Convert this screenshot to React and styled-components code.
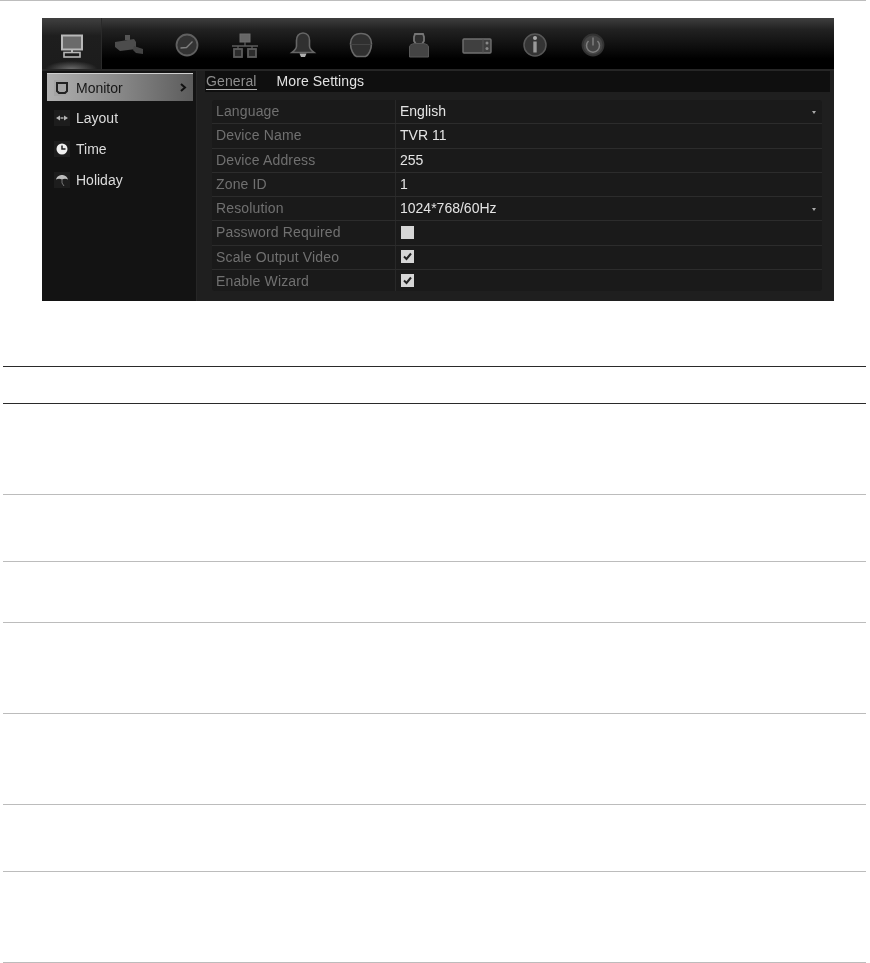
import React from "react";
import styled, { createGlobalStyle } from "styled-components";

const Global = createGlobalStyle`
  html, body { margin: 0; padding: 0; background: #fff; }
  body { font-family: "Liberation Sans", Arial, sans-serif; }
`;

const tabIcons = [
  // camera
  <g key="cam">
    <path d="M11 5h5v5h-5z" fill="#555" />
    <path d="M1 12l19-3 2 3v7l-16 2-5-4z" fill="#4c4c4c" />
    <path d="M20 16l9 3v5l-7-1-3-3z" fill="#444" />
  </g>,
  // clock
  <g key="clock" transform="translate(2 0)">
    <circle cx="13" cy="15" r="10.500" fill="#333" stroke="#606060" strokeWidth="1.800" />
    <path d="M6.500 18l6-.5 6-6" fill="none" stroke="#808080" strokeWidth="1.300" />
  </g>,
  // network
  <g key="net" fill="none" stroke="#5c5c5c">
    <rect x="10" y="4" width="10" height="8" fill="#666" stroke="#6e6e6e" />
    <path d="M15 12v4M2 16h26M8 16v3M22 16v3" strokeWidth="1.300" />
    <rect x="4" y="19" width="8" height="8" fill="#2c2c2c" strokeWidth="1.800" />
    <rect x="18" y="19" width="8" height="8" fill="#2c2c2c" strokeWidth="1.800" />
  </g>,
  // bell
  <g key="bell">
    <path d="M15 3c4.500 0 6.500 3.500 6.500 7.500v5.500c0 3 2.500 5 4.500 6.500H4c2-1.500 4.500-3.500 4.500-6.500v-5.500C8.500 6.500 10.500 3 15 3z" fill="#303030" stroke="#666" strokeWidth="1.600" />
    <path d="M11.500 23.500h7l-1.500 3.500h-4z" fill="#b0b0b0" />
  </g>,
  // helmet
  <g key="helmet">
    <path d="M15 3.500c7 0 10.500 4.500 10.500 10 0 6-3 12-6 13h-9c-3-1-6-7-6-13 0-5.500 3.500-10 10.500-10z" fill="#303030" stroke="#686868" strokeWidth="1.600" />
    <path d="M4.500 14.500h21" stroke="#444" />
  </g>,
  // person
  <g key="person">
    <path d="M11 4h8l1 3v4l-2 3h-6l-2-3V7z" fill="#2e2e2e" stroke="#757575" strokeWidth="1.800" />
    <path d="M5.500 17c0-2 2-3 5-3.500h9c3 .5 5 1.500 5 3.500v10h-19z" fill="#444" stroke="#585858" />
  </g>,
  // hdd
  <g key="hdd">
    <rect x="1" y="9" width="28" height="14" rx="1" fill="#404040" stroke="#707070" strokeWidth="1.400" />
    <path d="M21 9v14" stroke="#565656" />
    <circle cx="25" cy="13" r="1.500" fill="#888" />
    <circle cx="25" cy="18.500" r="1.500" fill="#888" />
  </g>,
  // info
  <g key="info">
    <circle cx="15" cy="15" r="11" fill="#343434" stroke="#585858" strokeWidth="1.500" />
    <circle cx="15" cy="8" r="2" fill="#aaa" />
    <rect x="13.300" y="11.500" width="3.400" height="11" fill="#999" />
  </g>,
  // power
  <g key="power">
    <circle cx="15" cy="15" r="10.500" fill="#444" stroke="#333" strokeWidth="1.800" />
    <path d="M10.500 11a6.500 6.500 0 1 0 9 0" fill="none" stroke="#7e7e7e" strokeWidth="1.500" />
    <path d="M15 7.500v8" stroke="#7e7e7e" strokeWidth="1.500" />
  </g>,
];

const menuIcons = {
  monitor: (
    <svg width="14" height="14" viewBox="0 0 14 14">
      <path d="M2 2h10v8l-2 2H4l-2-2z" fill="none" stroke="#222" strokeWidth="2" />
    </svg>
  ),
  layout: (
    <svg width="14" height="12" viewBox="0 0 14 12">
      <path d="M1 6l4-2.500v5zM13 6L9 3.500v5z" fill="#b5b5b5" />
      <rect x="5.500" y="5" width="3" height="2" fill="#8a8a8a" />
    </svg>
  ),
  time: (
    <svg width="14" height="14" viewBox="0 0 14 14">
      <circle cx="7" cy="7" r="5.500" fill="#f0f0f0" />
      <path d="M7 3.500v3.500h3.500" fill="none" stroke="#222" strokeWidth="1.500" />
    </svg>
  ),
  holiday: (
    <svg width="14" height="14" viewBox="0 0 14 14">
      <path d="M1 6.500C2 3 5 2 7 2s5 1 6 4.500C11 5.500 9 5.500 7 6.500 5 5.500 3 5.500 1 6.500z" fill="#bdbdbd" />
      <path d="M7 6v4l2 3" stroke="#777" fill="none" />
    </svg>
  ),
};

const settings = [
  { label: "Language", value: "English", select: true },
  { label: "Device Name", value: "TVR 11" },
  { label: "Device Address", value: "255" },
  { label: "Zone ID", value: "1" },
  { label: "Resolution", value: "1024*768/60Hz", select: true },
  { label: "Password Required", box: "off" },
  { label: "Scale Output Video", box: "on" },
  { label: "Enable Wizard", box: "on" },
];

const menu = [
  { key: "monitor", label: "Monitor", active: true },
  { key: "layout", label: "Layout" },
  { key: "time", label: "Time" },
  { key: "holiday", label: "Holiday" },
];

const tableRows = [91, 67, 61, 91, 91, 67, 91];

export default function App() {
  return (
    <Page>
      <Global />
      <TopRule />
      <Panel>
        <Toolbar>
          <ActiveTab>
            <svg width="24" height="24" viewBox="0 0 24 24">
              <rect x="2" y="1.500" width="20" height="14" fill="#6a6a6a" stroke="#b8b8b8" strokeWidth="2" />
              <path d="M12 16v3" stroke="#b8b8b8" strokeWidth="2" />
              <rect x="4" y="18.500" width="16" height="4.500" fill="none" stroke="#b8b8b8" strokeWidth="1.600" />
            </svg>
          </ActiveTab>
          <TabRow>
            {tabIcons.map((icon, i) => (
              <TabIcon key={i}>
                <svg width="30" height="30" viewBox="0 0 30 30">{icon}</svg>
              </TabIcon>
            ))}
          </TabRow>
        </Toolbar>
        <Body>
          <Sidebar>
            {menu.map((m) => (
              <MenuItem key={m.key} $active={m.active}>
                <MenuIcon $active={m.active}>{menuIcons[m.key]}</MenuIcon>
                <span>{m.label}</span>
                {m.active && (
                  <Chevron width="7" height="9" viewBox="0 0 7 9">
                    <path d="M1 1l4 3.500-4 3.500" fill="none" stroke="#111" strokeWidth="2" />
                  </Chevron>
                )}
              </MenuItem>
            ))}
          </Sidebar>
          <Content>
            <SubTabs>
              <SubTab $active>General</SubTab>
              <SubTab>More Settings</SubTab>
            </SubTabs>
            <Frame>
              {settings.map((s) => (
                <SettingRow key={s.label}>
                  <Label>{s.label}</Label>
                  <Value>
                    {s.value}
                    {s.box && (
                      <CheckBox>
                        {s.box === "on" && (
                          <svg width="13" height="13" viewBox="0 0 13 13">
                            <path d="M3 6.500l2.500 2.500 4.500-5.500" fill="none" stroke="#222" strokeWidth="2" />
                          </svg>
                        )}
                      </CheckBox>
                    )}
                    {s.select && <Caret />}
                  </Value>
                </SettingRow>
              ))}
            </Frame>
          </Content>
        </Body>
      </Panel>
      <Table>
        <HeadRow />
        {tableRows.map((h, i) => (
          <TableRow key={i} $h={h} />
        ))}
      </Table>
    </Page>
  );
}

const Page = styled.div`
  width: 870px;
  height: 963px;
  overflow: hidden;
  background: #fff;
`;

const TopRule = styled.div`
  height: 1px;
  background: #bdbdbd;
  margin: 0 4px 0 0;
`;

const Panel = styled.div`
  width: 792px;
  height: 283px;
  margin: 17px 0 0 42px;
  background: #111;
  overflow: hidden;
  filter: blur(0.7px);
`;

const Toolbar = styled.div`
  height: 53px;
  display: flex;
  background: linear-gradient(#3e3e3e 0, #222 22%, #0c0c0c 60%, #000 80%, #000 100%);
  border-bottom: 2px solid #262626;
  box-sizing: border-box;
`;

const ActiveTab = styled.div`
  width: 60px;
  flex: none;
  display: flex;
  justify-content: center;
  padding-top: 16px;
  box-sizing: border-box;
  background: radial-gradient(ellipse 26px 8px at 50% 100%, #6a6a6a, transparent),
    linear-gradient(#404040, #1e1e1e 35%, #1c1c1c);
  border-right: 1px solid #2a2a2a;
`;

const TabRow = styled.div`
  display: flex;
  margin-left: -2px;
`;

const TabIcon = styled.div`
  width: 58px;
  display: flex;
  justify-content: center;
  padding-top: 12px;
  box-sizing: border-box;
  filter: blur(0.6px);
`;

const Body = styled.div`
  display: flex;
  height: 230px;
`;

const Sidebar = styled.div`
  width: 155px;
  flex: none;
  box-sizing: border-box;
  padding: 2px 3px 0 5px;
  background: #131313;
  border-right: 1px solid #262626;
`;

const MenuItem = styled.div`
  height: ${(p) => (p.$active ? "28px" : "31px")};
  margin-bottom: ${(p) => (p.$active ? "1px" : "0")};
  display: flex;
  align-items: center;
  gap: 6px;
  padding: ${(p) => (p.$active ? "1px 7px 0" : "0 7px")};
  box-sizing: border-box;
  font-size: 14px;
  color: ${(p) => (p.$active ? "#161616" : "#dcdcdc")};
  background: ${(p) => (p.$active ? "linear-gradient(90deg, #b0b0b0, #8c8c8c 45%, #5c5c5c)" : "transparent")};
  box-shadow: ${(p) => (p.$active ? "inset 0 1px 0 #d0d0d0" : "none")};
`;

const MenuIcon = styled.div`
  width: 16px;
  height: 16px;
  flex: none;
  display: flex;
  align-items: center;
  justify-content: center;
  background: ${(p) => (p.$active ? "#a4a4a4" : "#1d1d1d")};
`;

const Chevron = styled.svg`
  margin-left: auto;
  margin-right: -1px;
`;

const Content = styled.div`
  flex: 1;
  background: #1f1f1f;
  padding: 0 12px 0 15px;
  display: flex;
  flex-direction: column;
`;

const SubTabs = styled.div`
  height: 21px;
  margin: 0 -8px 0 -7px;
  display: flex;
  gap: 20px;
  background: #0f0f0f;
  padding-left: 1px;
  flex: none;
`;

const SubTab = styled.div`
  height: 18px;
  line-height: 21px;
  font-size: 14px;
  letter-spacing: 0.1px;
  color: ${(p) => (p.$active ? "#8e8e8e" : "#e2e2e2")};
  border-bottom: ${(p) => (p.$active ? "1px solid #b0b0b0" : "none")};
`;

const Frame = styled.div`
  margin-top: 8px;
  border-radius: 3px;
  background: #1a1a1a;
  height: 191px;
  overflow: hidden;
`;

const SettingRow = styled.div`
  height: 24.3px;
  box-sizing: border-box;
  display: grid;
  grid-template-columns: 184px 1fr;
  border-bottom: 1px solid #2c2c2c;
`;

const Label = styled.div`
  padding-left: 4px;
  font-size: 14px;
  letter-spacing: 0.15px;
  line-height: 23px;
  color: #707070;
  border-right: 1px solid #282828;
`;

const Value = styled.div`
  position: relative;
  padding-left: 4px;
  font-size: 14px;
  line-height: 23px;
  color: #e4e4e4;
  display: flex;
  align-items: center;
`;

const CheckBox = styled.div`
  width: 13px;
  height: 13px;
  background: #d6d6d6;
  margin: -2px 0 0 1px;
  svg { display: block; }
`;

const Caret = styled.div`
  position: absolute;
  right: 6px;
  top: 11px;
  width: 0;
  height: 0;
  border: 2.5px solid transparent;
  border-top: 3px solid #aaa;
  border-bottom: 0;
`;

const Table = styled.div`
  margin: 65px 4px 0 3px;
`;

const HeadRow = styled.div`
  height: 36px;
  border-top: 1px solid #2a2a2a;
  border-bottom: 1px solid #2a2a2a;
`;

const TableRow = styled.div`
  height: ${(p) => p.$h - 1}px;
  border-bottom: 1px solid #bcbcbc;
`;
